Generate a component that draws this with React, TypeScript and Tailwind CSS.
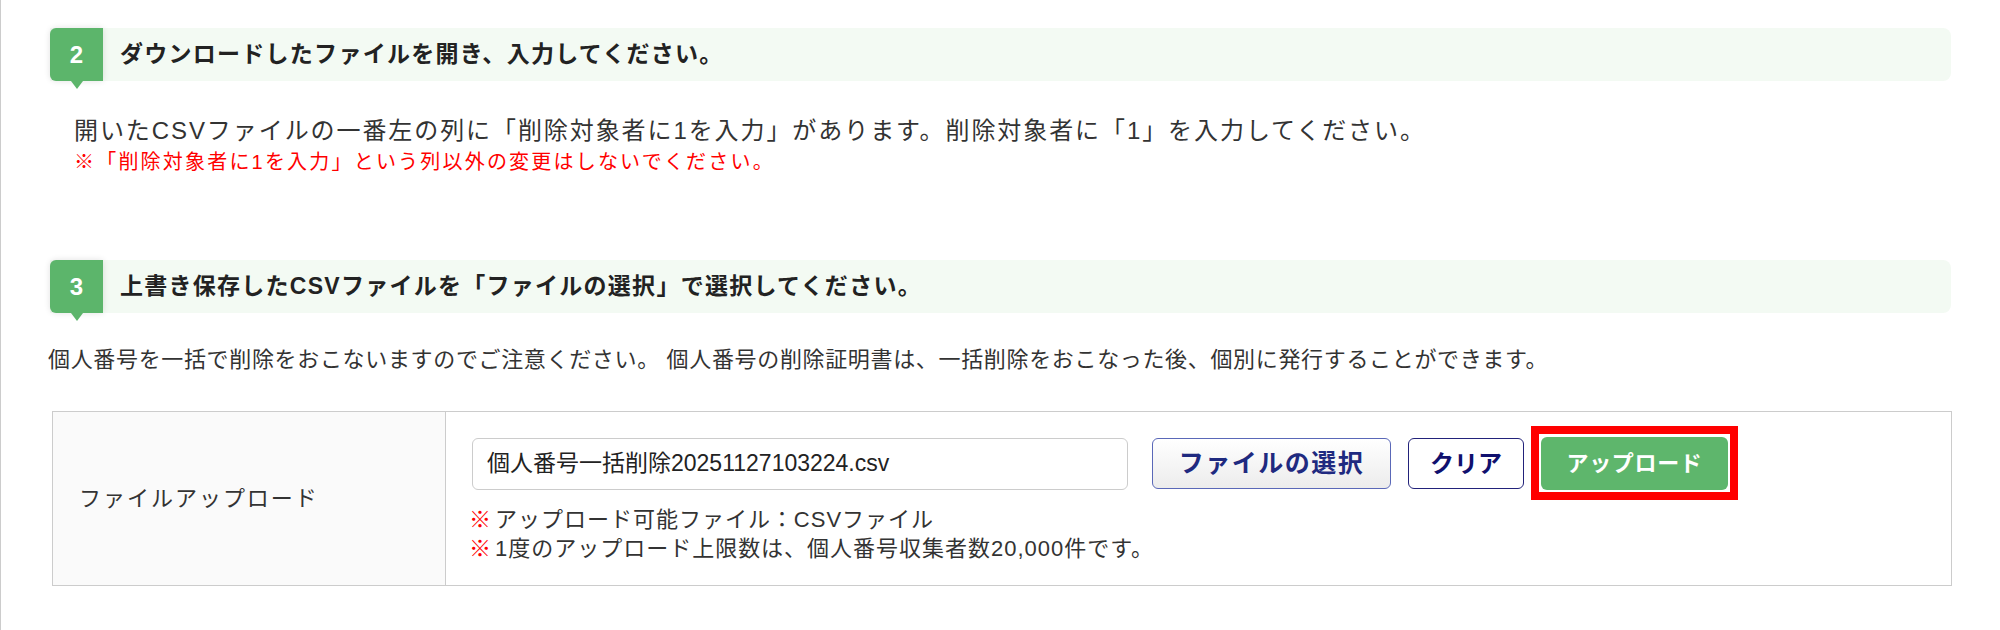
import React from 'react';

const FONT = '"Liberation Sans", "Noto Sans CJK JP", sans-serif';

interface StepHeaderProps {
    step: number;
    title: string;
}

const StepHeader = ({ step, title }: StepHeaderProps) => (
    <div className="flex h-[53px] items-center rounded-r-lg bg-[#f3faf3]">
        <div className="relative flex h-full w-[53px] shrink-0 items-center justify-center rounded-l-md bg-[#5cb56b] text-[24px] font-bold text-white shadow-[0_0_6px_rgba(0,0,0,0.12)]">
            {step}
            <span className="absolute bottom-[-8px] left-1/2 h-0 w-0 -translate-x-1/2 border-t-[8px] border-r-[6px] border-l-[6px] border-t-[#5cb56b] border-r-transparent border-l-transparent" />
        </div>
        <h2 className="ml-[17px] text-[23px] leading-none font-bold tracking-[0.055em] text-[#222]">{title}</h2>
    </div>
);

const Mark = () => <span className="mr-[3px] text-[#ff0000]">※</span>;

export default function App() {
    return (
        <div className="min-h-[630px] w-[2000px] border-l border-[#cccccc] bg-white" style={{ fontFamily: FONT }}>
            <div className="pt-[28px] pr-[49px] pl-[49px]">
                {/* 手順2 */}
                <StepHeader step={2} title="ダウンロードしたファイルを開き、入力してください。" />
                <div className="mt-[34px] pl-[24px]">
                    <p className="text-[24px] leading-[32px] tracking-[0.08em] text-[#333]">
                        開いたCSVファイルの一番左の列に「削除対象者に1を入力」があります。削除対象者に「1」を入力してください。
                    </p>
                    <p className="text-[20px] leading-[30px] tracking-[0.11em] text-[#ff0000]">
                        ※「削除対象者に1を入力」という列以外の変更はしないでください。
                    </p>
                </div>

                {/* 手順3 */}
                <div className="mt-[83px]">
                    <StepHeader step={3} title="上書き保存したCSVファイルを「ファイルの選択」で選択してください。" />
                </div>
                <p className="mt-[31px] ml-[-2px] text-[22px] leading-[32px] tracking-[0.03em] text-[#333]">
                    個人番号を一括で削除をおこないますのでご注意ください。 個人番号の削除証明書は、一括削除をおこなった後、個別に発行することができます。
                </p>

                <div className="mt-[35px] ml-[2px] flex h-[175px] w-[1900px] border border-[#cccccc]">
                    <div className="flex w-[393px] shrink-0 items-center border-r border-[#cccccc] bg-[#fafafa] pl-[26px] text-[22px] tracking-[0.09em] text-[#333]">
                        ファイルアップロード
                    </div>
                    <div className="flex-1 pt-[25px] pl-[26px]">
                        <div className="flex items-center">
                            <div className="flex h-[52px] w-[656px] items-center rounded-md border border-[#cccccc] bg-white px-[14px] text-[23px] text-[#222]">
                                個人番号一括削除20251127103224.csv
                            </div>
                            <button
                                type="button"
                                className="ml-[24px] h-[51px] w-[239px] rounded-md border border-[#5a68b8] bg-gradient-to-b from-white to-[#ececec] text-[25px] font-bold tracking-[0.06em] text-[#1f2a80]"
                            >
                                ファイルの選択
                            </button>
                            <button
                                type="button"
                                className="ml-[17px] h-[51px] w-[116px] rounded-md border border-[#22227a] bg-white text-[24px] font-bold text-[#10106e]"
                            >
                                クリア
                            </button>
                            <button
                                type="button"
                                className="relative ml-[17px] h-[53px] w-[187px] rounded-md bg-[#5eb66c] text-[22px] font-bold tracking-[0.03em] text-white"
                            >
                                アップロード
                                <span className="pointer-events-none absolute -inset-x-[10px] -top-[11px] -bottom-[10px] border-[8px] border-[#ff0000]" />
                            </button>
                        </div>
                        <div className="mt-[15px] ml-[-3px] text-[22px] leading-[29px] tracking-[0.045em] text-[#333]">
                            <p>
                                <Mark />
                                アップロード可能ファイル：CSVファイル
                            </p>
                            <p>
                                <Mark />
                                1度のアップロード上限数は、個人番号収集者数20,000件です。
                            </p>
                        </div>
                    </div>
                </div>
            </div>
        </div>
    );
}
